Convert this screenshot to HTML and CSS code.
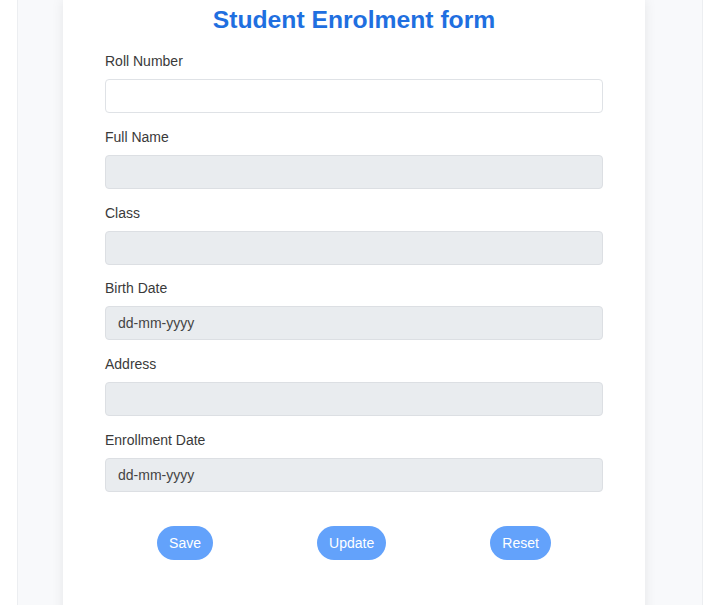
FILE: index.html
```html
<!DOCTYPE html>
<html lang="en">
<head>
<meta charset="utf-8">
<title>Student Enrolment form</title>
<link rel="stylesheet" href="styles.css">
</head>
<body>
<div class="page">
  <div class="card">
    <h1 class="title">Student Enrolment form</h1>
    <form class="form">
      <div class="field">
        <label class="label">Roll Number</label>
        <input class="input" type="text">
      </div>
      <div class="field">
        <label class="label">Full Name</label>
        <input class="input input-disabled" type="text" disabled>
      </div>
      <div class="field">
        <label class="label">Class</label>
        <input class="input input-disabled" type="text" disabled>
      </div>
      <div class="field">
        <label class="label">Birth Date</label>
        <input class="input input-disabled" type="text" placeholder="dd-mm-yyyy" disabled>
      </div>
      <div class="field">
        <label class="label">Address</label>
        <input class="input input-disabled" type="text" disabled>
      </div>
      <div class="field">
        <label class="label">Enrollment Date</label>
        <input class="input input-disabled" type="text" placeholder="dd-mm-yyyy" disabled>
      </div>
      <div class="actions">
        <button type="button" class="btn">Save</button>
        <button type="button" class="btn">Update</button>
        <button type="button" class="btn">Reset</button>
      </div>
    </form>
  </div>
</div>
</body>
</html>
```
FILE: styles.css
```css
html, body {
  margin: 0;
  padding: 0;
  background: #ffffff;
  font-family: "Liberation Sans", Arial, sans-serif;
}

.page {
  margin: 0 17px;
  padding: 0 57px 0 45px;
  background: #f8f9fb;
  border-left: 1px solid #eceef1;
  border-right: 1px solid #eceef1;
  min-height: 605px;
  box-sizing: border-box;
}

.card {
  background: #ffffff;
  box-shadow: 0 0 12px rgba(0, 0, 0, 0.08);
  padding: 5px 42px 60px;
  min-height: 605px;
  box-sizing: border-box;
}

.title {
  margin: 0;
  text-align: center;
  font-size: 24.7px;
  line-height: 30px;
  font-weight: bold;
  color: #1f6fe0;
}

.form {
  margin-top: 17px;
}

.field {
  margin-bottom: 14.8px;
}

.label {
  display: block;
  font-size: 14px;
  line-height: 18px;
  color: #3a3a3a;
  margin-bottom: 9px;
}

.input {
  display: block;
  width: 100%;
  height: 34px;
  box-sizing: border-box;
  border: 1px solid #dfe2e6;
  border-radius: 4px;
  background: #ffffff;
  padding: 0 12px;
  font-family: "Liberation Sans", Arial, sans-serif;
  font-size: 14px;
  color: #444;
}

.input-disabled {
  background: #e9ecef;
  border-color: #dcdfe3;
}

.input::placeholder {
  color: #444;
  opacity: 1;
}

.actions {
  display: flex;
  justify-content: space-around;
  margin-top: 34px;
}

.btn {
  height: 34px;
  padding: 0 12px;
  border: none;
  border-radius: 17px;
  background: #63a2fb;
  color: #ffffff;
  font-family: "Liberation Sans", Arial, sans-serif;
  font-size: 14px;
  cursor: pointer;
}
```
